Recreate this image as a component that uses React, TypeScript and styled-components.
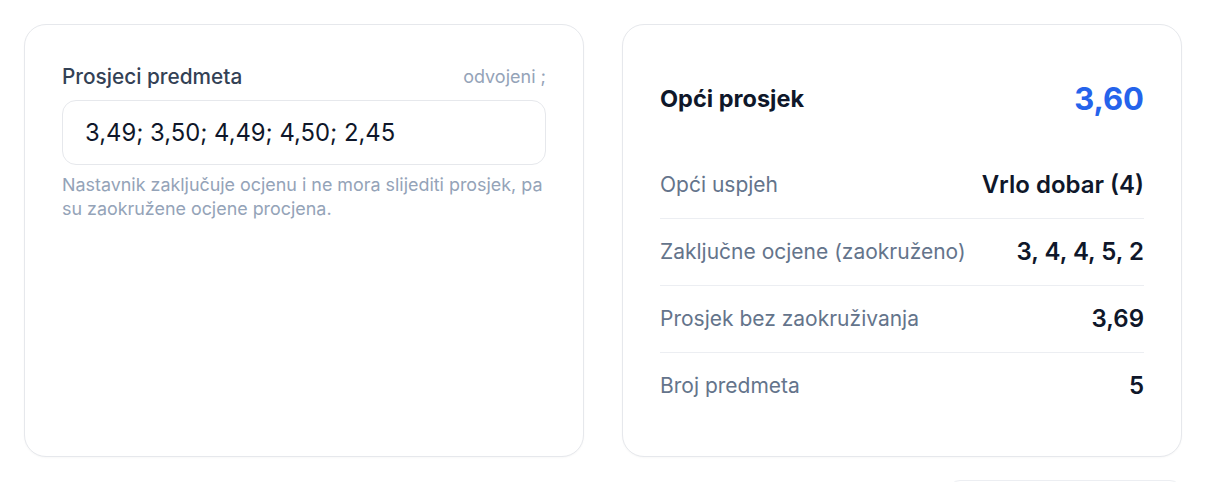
import * as React from 'react'
import styled, { createGlobalStyle } from 'styled-components'

const COLOR = {
  BORDER: '#e6e8ec',
  DIVIDER: '#eceef2',
  TEXT: '#0f172a',
  LABEL: '#334155',
  MUTED: '#64748b',
  HINT: '#94a3b8',
  BLUE: '#2563eb',
}

const GlobalStyle = createGlobalStyle`
  * {
    box-sizing: border-box;
  }
  body {
    margin: 0;
    background: #ffffff;
    font-family: Inter, 'Noto Sans', 'Liberation Sans', sans-serif;
    color: ${COLOR.TEXT};
    -webkit-font-smoothing: antialiased;
  }
`

interface Row {
  label: string
  value: string
}

const rows: Row[] = [
  { label: 'Opći uspjeh', value: 'Vrlo dobar (4)' },
  { label: 'Zaključne ocjene (zaokruženo)', value: '3, 4, 4, 5, 2' },
  { label: 'Prosjek bez zaokruživanja', value: '3,69' },
  { label: 'Broj predmeta', value: '5' },
]

const App = () => {
  const [input, setInput] = React.useState('3,49; 3,50; 4,49; 4,50; 2,45')
  return (
    <Page>
      <GlobalStyle />
      <Grid>
        <Card>
          <FieldHead>
            <FieldLabel htmlFor={'averages'}>Prosjeci predmeta</FieldLabel>
            <FieldHint>odvojeni ;</FieldHint>
          </FieldHead>
          <Input
            id={'averages'}
            value={input}
            onChange={e => setInput(e.target.value)}
          />
          <Helper>
            Nastavnik zaključuje ocjenu i ne mora slijediti prosjek, pa su
            zaokružene ocjene procjena.
          </Helper>
        </Card>
        <Card>
          <SummaryHead>
            <SummaryTitle>Opći prosjek</SummaryTitle>
            <SummaryValue>3,60</SummaryValue>
          </SummaryHead>
          <RowList>
            {rows.map(row => (
              <StatRow key={row.label}>
                <StatLabel>{row.label}</StatLabel>
                <StatValue>{row.value}</StatValue>
              </StatRow>
            ))}
          </RowList>
        </Card>
      </Grid>
      <Footer>
        <GhostButton />
      </Footer>
    </Page>
  )
}

const Page = styled.div`
  padding: 24px 24px 0;
`

const Grid = styled.div`
  display: grid;
  grid-template-columns: 560px 560px;
  gap: 38px;
`

const Card = styled.section`
  display: flex;
  flex-direction: column;
  border: 1px solid ${COLOR.BORDER};
  border-radius: 22px;
  background: #ffffff;
  padding: 37px 37px 37px;
  box-shadow: 0 1px 2px rgba(15, 23, 42, 0.03);
`

const FieldHead = styled.div`
  display: flex;
  align-items: center;
  justify-content: space-between;
  height: 28px;
  margin-bottom: 10px;
`

const FieldLabel = styled.label`
  font-size: 20.8px;
  font-weight: 500;
  color: ${COLOR.LABEL};
`

const FieldHint = styled.span`
  font-size: 18px;
  color: ${COLOR.HINT};
`

const Input = styled.input`
  width: 100%;
  height: 65px;
  border: 1px solid ${COLOR.BORDER};
  border-radius: 14px;
  padding: 0 22px;
  font-family: inherit;
  font-size: 23.8px;
  color: ${COLOR.TEXT};
  background: #ffffff;
  outline: none;
`

const Helper = styled.p`
  margin: 8px 0 0;
  font-size: 17.9px;
  line-height: 24px;
  color: ${COLOR.HINT};
`

const SummaryHead = styled.div`
  display: flex;
  align-items: center;
  justify-content: space-between;
  height: 36px;
  margin-top: 18px;
  margin-bottom: 36px;
`

const SummaryTitle = styled.h2`
  margin: 0;
  font-size: 23.5px;
  font-weight: 700;
  color: ${COLOR.TEXT};
`

const SummaryValue = styled.span`
  font-size: 31px;
  font-weight: 700;
  color: ${COLOR.BLUE};
`

const RowList = styled.div`
  display: flex;
  flex-direction: column;
`

const StatRow = styled.div`
  display: flex;
  align-items: center;
  justify-content: space-between;
  padding: 19px 0;
  line-height: 28px;
  border-bottom: 1px solid ${COLOR.DIVIDER};

  &:last-child {
    border-bottom: none;
  }
`

const StatLabel = styled.span`
  font-size: 21px;
  color: ${COLOR.MUTED};
`

const StatValue = styled.span`
  font-size: 24px;
  font-weight: 600;
  color: ${COLOR.TEXT};
`

const Footer = styled.div`
  display: flex;
  justify-content: flex-end;
  margin-top: 23px;
`

const GhostButton = styled.div`
  width: 234px;
  height: 48px;
  border: 1px solid ${COLOR.DIVIDER};
  border-radius: 12px;
`

export default App
